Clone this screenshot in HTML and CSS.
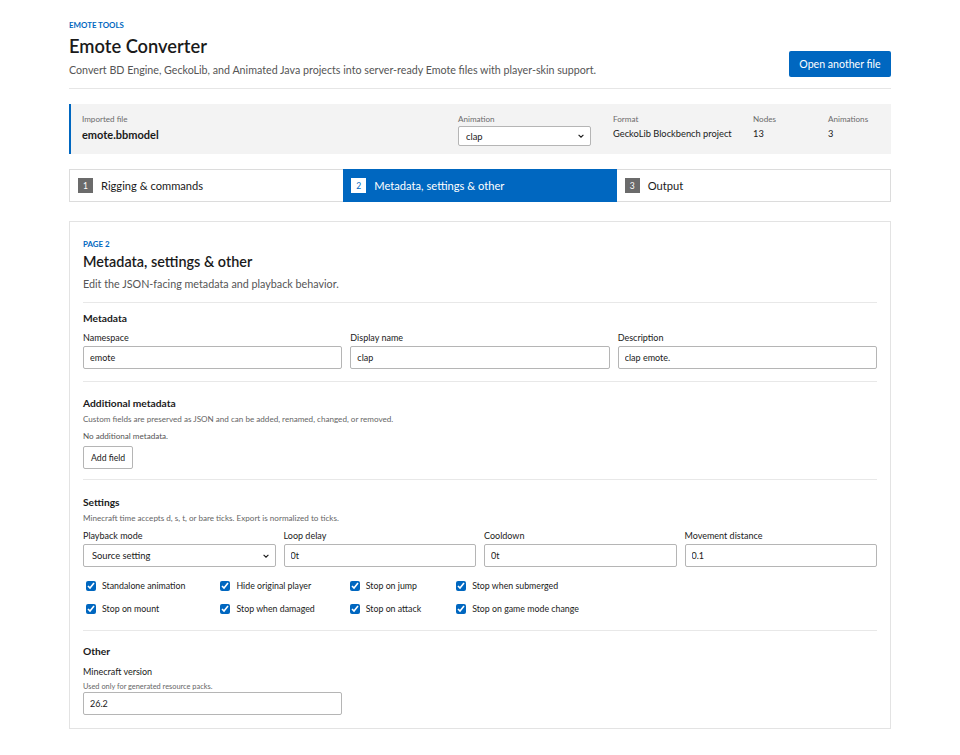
FILE: index.html
```html
<!DOCTYPE html>
<html lang="en">
<head>
<meta charset="utf-8">
<title>Emote Converter</title>
<link rel="stylesheet" href="styles.css">
</head>
<body>
<div class="page">
  <header class="top">
    <div class="top-text">
      <div class="eyebrow">EMOTE TOOLS</div>
      <h1 class="title">Emote Converter</h1>
      <p class="subtitle">Convert BD Engine, GeckoLib, and Animated Java projects into server-ready Emote files with player-skin support.</p>
    </div>
    <button class="btn-primary" type="button">Open another file</button>
  </header>

  <section class="filebar">
    <div class="fcell">
      <div class="flabel">Imported file</div>
      <div class="fname">emote.bbmodel</div>
    </div>
    <div class="fcell">
      <div class="flabel">Animation</div>
      <div class="select-wrap small">
        <select class="select sel-small"><option>clap</option></select>
        <svg class="chev" viewBox="0 0 10 10" width="8" height="8"><path d="M2 3.5 L5 6.5 L8 3.5" fill="none" stroke="#1a1a1a" stroke-width="1.4"/></svg>
      </div>
    </div>
    <div class="fcell">
      <div class="flabel">Format</div>
      <div class="fval">GeckoLib Blockbench project</div>
    </div>
    <div class="fcell">
      <div class="flabel">Nodes</div>
      <div class="fval">13</div>
    </div>
    <div class="fcell">
      <div class="flabel">Animations</div>
      <div class="fval">3</div>
    </div>
  </section>

  <nav class="tabs">
    <div class="tab"><span class="num">1</span><span>Rigging &amp; commands</span></div>
    <div class="tab active"><span class="num">2</span><span>Metadata, settings &amp; other</span></div>
    <div class="tab"><span class="num">3</span><span>Output</span></div>
  </nav>

  <main class="panel">
    <div class="phead">
      <div class="eyebrow">PAGE 2</div>
      <h2 class="ptitle">Metadata, settings &amp; other</h2>
      <p class="pdesc">Edit the JSON-facing metadata and playback behavior.</p>
    </div>

    <section class="sec first">
      <h3 class="stitle">Metadata</h3>
      <div class="grid3">
        <label class="field"><span class="lab">Namespace</span><input class="input" value="emote"></label>
        <label class="field"><span class="lab">Display name</span><input class="input" value="clap"></label>
        <label class="field"><span class="lab">Description</span><input class="input" value="clap emote."></label>
      </div>
    </section>

    <section class="sec extra">
      <h3 class="stitle">Additional metadata</h3>
      <p class="hint">Custom fields are preserved as JSON and can be added, renamed, changed, or removed.</p>
      <p class="empty">No additional metadata.</p>
      <button class="btn" type="button">Add field</button>
    </section>

    <section class="sec settings">
      <h3 class="stitle">Settings</h3>
      <p class="hint">Minecraft time accepts d, s, t, or bare ticks. Export is normalized to ticks.</p>
      <div class="grid4">
        <label class="field"><span class="lab">Playback mode</span>
          <span class="select-wrap">
            <select class="select"><option>Source setting</option></select>
            <svg class="chev" viewBox="0 0 10 10" width="8" height="8"><path d="M2 3.5 L5 6.5 L8 3.5" fill="none" stroke="#1a1a1a" stroke-width="1.4"/></svg>
          </span>
        </label>
        <label class="field"><span class="lab">Loop delay</span><input class="input" value="0t"></label>
        <label class="field"><span class="lab">Cooldown</span><input class="input" value="0t"></label>
        <label class="field"><span class="lab">Movement distance</span><input class="input" value="0.1"></label>
      </div>
      <div class="checks">
        <label class="check"><input type="checkbox" checked><span>Standalone animation</span></label>
        <label class="check"><input type="checkbox" checked><span>Hide original player</span></label>
        <label class="check"><input type="checkbox" checked><span>Stop on jump</span></label>
        <label class="check"><input type="checkbox" checked><span>Stop when submerged</span></label>
        <label class="check"><input type="checkbox" checked><span>Stop on mount</span></label>
        <label class="check"><input type="checkbox" checked><span>Stop when damaged</span></label>
        <label class="check"><input type="checkbox" checked><span>Stop on attack</span></label>
        <label class="check"><input type="checkbox" checked><span>Stop on game mode change</span></label>
      </div>
    </section>

    <section class="sec last">
      <h3 class="stitle">Other</h3>
      <div class="grid3 other">
        <label class="field"><span class="lab">Minecraft version</span><span class="mini">Used only for generated resource packs.</span><input class="input" value="26.2"></label>
      </div>
    </section>
  </main>
</div>
</body>
</html>
```

FILE: styles.css
```css
* { box-sizing: border-box; }
html, body { margin: 0; padding: 0; background: #ffffff; }
body {
  font-family: Lato, "Noto Sans", "Liberation Sans", sans-serif;
  color: #1a1a1a;
}
.page {
  width: 822px;
  margin: 0 auto;
  padding: 19px 0 26px;
}

/* header */
.top {
  display: flex;
  align-items: flex-end;
  justify-content: space-between;
  padding-bottom: 10px;
  border-bottom: 1px solid #e6e6e6;
}
.eyebrow {
  font-size: 7.9px;
  font-weight: 700;
  color: #0067c0;
  line-height: 12px;
}
.title {
  margin: 3px 0 0;
  font-size: 18.3px;
  font-weight: 600;
  line-height: 25px;
}
.subtitle {
  margin: 3px 0 0;
  font-size: 10.7px;
  color: #555555;
  line-height: 16px;
}
.btn-primary {
  font-family: inherit;
  background: #0067c0;
  color: #ffffff;
  border: 0;
  border-radius: 2px;
  font-size: 10.6px;
  height: 26px;
  width: 102px;
  padding: 0;
  white-space: nowrap;
  margin-bottom: 1px;
}

/* file bar */
.filebar {
  margin-top: 15px;
  background: #f3f3f3;
  border-left: 2px solid #0067c0;
  height: 50px;
  display: grid;
  grid-template-columns: 1fr 133px 118px 53px 51px;
  column-gap: 22px;
  padding: 9px 12px 0 11px;
}
.flabel {
  font-size: 8.1px;
  color: #6b6b6b;
  line-height: 12px;
  white-space: nowrap;
}
.fname {
  margin-top: 2px;
  font-size: 11px;
  font-weight: 700;
  line-height: 15px;
}
.fval {
  margin-top: 2px;
  font-size: 9.3px;
  line-height: 13px;
  white-space: nowrap;
}
.select-wrap {
  position: relative;
  display: block;
}
.select-wrap.small { margin-top: 1px; }
.select {
  -webkit-appearance: none;
  appearance: none;
  width: 100%;
  height: 23px;
  border: 1px solid #b5b5b5;
  border-radius: 2px;
  background: #ffffff;
  font-family: inherit;
  font-size: 9.4px;
  color: #1a1a1a;
  padding: 0 8px;
  display: block;
}
.sel-small { height: 20px; padding: 0 7px; }
.chev {
  position: absolute;
  right: 6px;
  top: 50%;
  margin-top: -4px;
}

/* tabs */
.tabs {
  margin-top: 15px;
  display: grid;
  grid-template-columns: repeat(3, 1fr);
  border: 1px solid #dcdcdc;
  height: 33px;
}
.tab {
  display: flex;
  align-items: center;
  gap: 8px;
  padding-left: 8px;
  font-size: 11.15px;
  color: #1a1a1a;
}
.tab.active {
  background: #0067c0;
  color: #ffffff;
  margin: -1px 0;
}
.num {
  width: 15px;
  height: 15px;
  background: #6b6b6b;
  color: #ffffff;
  font-size: 8.5px;
  display: flex;
  align-items: center;
  justify-content: center;
}
.tab.active .num {
  background: #ffffff;
  color: #0067c0;
}

/* panel */
.panel {
  margin-top: 19px;
  border: 1px solid #e3e3e3;
  padding: 16px 13px 13px;
}
.ptitle {
  margin: 2px 0 0;
  font-size: 14.4px;
  font-weight: 600;
  line-height: 20px;
}
.pdesc {
  margin: 4px 0 0;
  font-size: 10.75px;
  color: #555555;
  line-height: 15px;
  padding-bottom: 11px;
  border-bottom: 1px solid #e8e8e8;
}
.sec {
  padding: 14px 0 12px;
  border-bottom: 1px solid #e8e8e8;
}
.sec.first { padding-top: 8px; }
.sec.extra { padding-bottom: 10px; }
.sec.settings { padding-top: 15px; padding-bottom: 14px; }
.sec.last { border-bottom: 0; padding-top: 13px; padding-bottom: 0; }
.stitle {
  margin: 0;
  font-size: 10.25px;
  font-weight: 700;
  line-height: 14px;
}
.hint {
  margin: 3px 0 0;
  font-size: 8.1px;
  color: #666666;
  line-height: 12px;
}
.empty {
  margin: 5px 0 0;
  font-size: 8.1px;
  color: #555555;
  line-height: 12px;
}
.btn {
  margin-top: 4px;
  font-family: inherit;
  font-size: 8.7px;
  background: #ffffff;
  border: 1px solid #b5b5b5;
  border-radius: 2px;
  height: 23px;
  padding: 0 7px;
  color: #1a1a1a;
  display: block;
}
.grid3 {
  margin-top: 7px;
  display: grid;
  grid-template-columns: repeat(3, 1fr);
  column-gap: 8px;
}
.grid3.other { margin-top: 8px; }
.grid4 {
  margin-top: 6px;
  display: grid;
  grid-template-columns: repeat(4, 1fr);
  column-gap: 8px;
}
.field {
  display: flex;
  flex-direction: column;
}
.lab {
  font-size: 9px;
  color: #1a1a1a;
  line-height: 12px;
  margin-bottom: 2px;
}
.mini {
  font-size: 7.4px;
  color: #666666;
  line-height: 11px;
  margin-top: 1px;
  margin-bottom: 0;
}
.input {
  height: 23px;
  border: 1px solid #b5b5b5;
  border-radius: 2px;
  font-family: inherit;
  font-size: 9px;
  padding: 0 6px;
  color: #1a1a1a;
  background: #ffffff;
  width: 100%;
}
.checks {
  margin-top: 12px;
  display: grid;
  grid-template-columns: repeat(4, auto);
  justify-content: start;
  column-gap: 32px;
  row-gap: 9px;
}
.check {
  display: flex;
  align-items: center;
  gap: 6px;
  font-size: 8.8px;
  line-height: 14px;
  padding-left: 3px;
}
.check input {
  margin: 0;
  width: 10px;
  height: 10px;
  accent-color: #0067c0;
}
```
